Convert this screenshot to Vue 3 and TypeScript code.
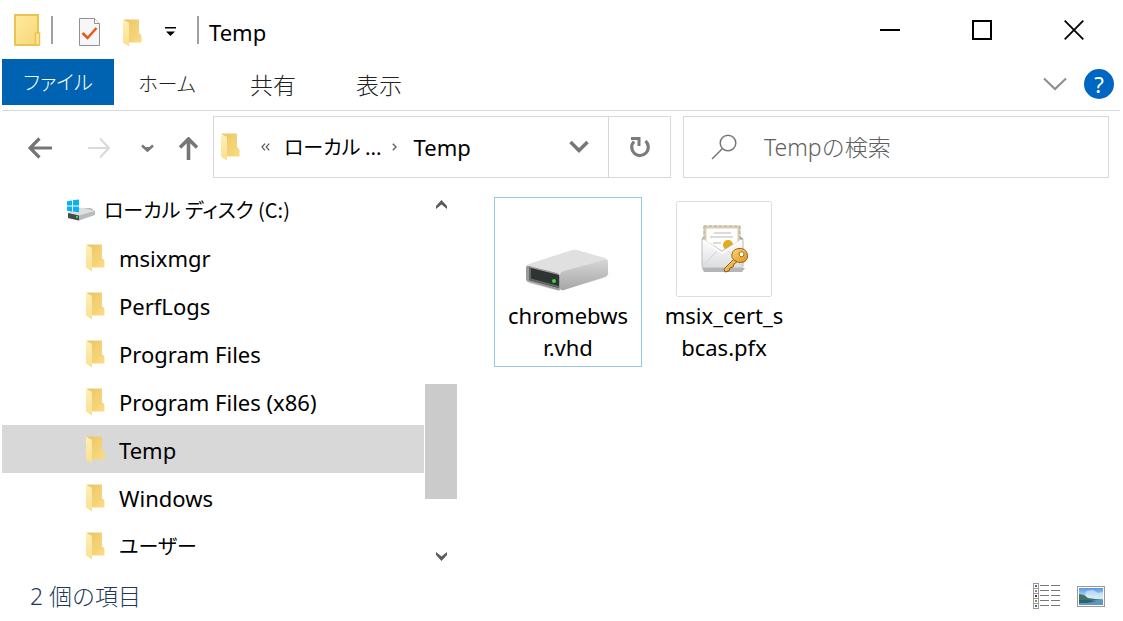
<script setup lang="ts">
import { ref } from 'vue'

interface Tab {
  label: string
  kana?: boolean
}

interface TreeItem {
  name: string
  kana?: boolean
}

interface FileItem {
  lines: string[]
  kind: 'disk' | 'certificate'
}

const tabs: Tab[] = [
  { label: 'ファイル', kana: true },
  { label: 'ホーム', kana: true },
  { label: '共有' },
  { label: '表示' },
]
const activeTab = ref('ファイル')

const folders: TreeItem[] = [
  { name: 'msixmgr' },
  { name: 'PerfLogs' },
  { name: 'Program Files' },
  { name: 'Program Files (x86)' },
  { name: 'Temp' },
  { name: 'Windows' },
  { name: 'ユーザー', kana: true },
]
const currentFolder = ref('Temp')

const files: FileItem[] = [
  { lines: ['chromebws', 'r.vhd'], kind: 'disk' },
  { lines: ['msix_cert_s', 'bcas.pfx'], kind: 'certificate' },
]
const focusedFile = ref(0)
const query = ref('')
</script>

<template>
  <div class="explorer">
    <svg class="defs" width="0" height="0" aria-hidden="true">
      <defs>
        <linearGradient id="folder-back" x1="0" y1="0" x2="1" y2="1">
          <stop offset="0" stop-color="#e9c566" />
          <stop offset="1" stop-color="#fbdc82" />
        </linearGradient>
        <linearGradient id="folder-front" x1="0" y1="0" x2="0" y2="1">
          <stop offset="0" stop-color="#fff0b5" />
          <stop offset="1" stop-color="#fbdf8d" />
        </linearGradient>
        <symbol id="folder" viewBox="0 0 19 28">
          <path d="M1 .5H16V14L18.500 16.500V23.500H6L1 22Z" fill="url(#folder-back)" />
          <path d="M0 .5 L6 4V27.500L0 23.500Z" fill="url(#folder-front)" />
        </symbol>
      </defs>
    </svg>

    <header class="titlebar">
      <svg class="app-icon" width="27" height="32" viewBox="0 0 27 32" aria-hidden="true">
        <defs>
          <linearGradient id="app-fill" x1="0" y1="0" x2="1" y2="1">
            <stop offset="0" stop-color="#ffeaa2" />
            <stop offset="1" stop-color="#f8d775" />
          </linearGradient>
        </defs>
        <rect x="1" y="1" width="23" height="30" fill="url(#app-fill)" stroke="#ebc34d" stroke-width="2" />
        <rect x="21.500" y="19" width="4" height="12" fill="#fde99b" stroke="#ebc34d" stroke-width="1.500" />
      </svg>
      <span class="divider"></span>
      <button class="quick props" aria-label="プロパティ">
        <svg width="21" height="28" viewBox="0 0 21 28">
          <path d="M.5 .5H15.500L20.500 5.500V27.500H.5Z" fill="#f7f7f8" stroke="#929292" />
          <path d="M15.500 .5V5.500H20.500" fill="#fff" stroke="#929292" />
          <path d="M3.500 15L8.500 20L17.500 10" fill="none" stroke="#e8591c" stroke-width="2.500" />
        </svg>
      </button>
      <button class="quick new-folder" aria-label="新しいフォルダー">
        <svg width="19" height="28"><use href="#folder" /></svg>
      </button>
      <button class="quick customize" aria-label="カスタマイズ">
        <svg width="11" height="10" viewBox="0 0 11 10"><path d="M0 0H11V1.500H0ZM1 4.500H10L5.500 9Z" fill="#000" /></svg>
      </button>
      <span class="divider"></span>
      <h1 class="title">Temp</h1>
      <div class="window-controls">
        <button aria-label="最小化">
          <svg width="20" height="20" viewBox="0 0 20 20"><path d="M0 10H20" stroke="#000" stroke-width="2" /></svg>
        </button>
        <button aria-label="最大化">
          <svg width="20" height="20" viewBox="0 0 20 20"><rect x="1" y="1" width="18" height="18" fill="none" stroke="#000" stroke-width="2" /></svg>
        </button>
        <button aria-label="閉じる">
          <svg width="20" height="20" viewBox="0 0 20 20"><path d="M.7 .7L19.300 19.300M19.300 .7L.7 19.300" stroke="#000" stroke-width="1.800" /></svg>
        </button>
      </div>
    </header>

    <nav class="ribbon">
      <button
        v-for="tab in tabs"
        :key="tab.label"
        class="tab"
        :class="{ active: tab.label === activeTab, kana: tab.kana }"
        @click="activeTab = tab.label"
      >{{ tab.label }}</button>
      <button class="expand" aria-label="リボンの展開">
        <svg width="24" height="14" viewBox="0 0 24 14"><path d="M1 1.500L12 12L23 1.500" fill="none" stroke="#8c8c8c" stroke-width="2" /></svg>
      </button>
      <button class="help" aria-label="ヘルプ">?</button>
    </nav>

    <div class="navbar">
      <button class="nav-back" aria-label="戻る">
        <svg width="24" height="22" viewBox="0 0 24 22"><path d="M11.500 1.500L2 11L11.500 20.500M2 11H24" fill="none" stroke="#767676" stroke-width="3.200" /></svg>
      </button>
      <button class="nav-forward" aria-label="進む">
        <svg width="24" height="22" viewBox="0 0 24 22"><path d="M13 1.500L22 11L13 20.500M22 11H1" fill="none" stroke="#d9d9d9" stroke-width="2" /></svg>
      </button>
      <button class="nav-recent" aria-label="最近表示した場所">
        <svg width="13" height="9" viewBox="0 0 13 9"><path d="M1 1.500L6.500 6.500L12 1.500M6.500 3V7" fill="none" stroke="#777" stroke-width="2.500" /></svg>
      </button>
      <button class="nav-up" aria-label="上へ">
        <svg width="19" height="23" viewBox="0 0 19 23"><path d="M1 10.500L9.500 2L18 10.500M9.500 2V23" fill="none" stroke="#767676" stroke-width="3.600" /></svg>
      </button>

      <div class="address">
        <svg class="address-icon" width="19" height="28" aria-hidden="true"><use href="#folder" /></svg>
        <svg class="overflow" width="9" height="8" viewBox="0 0 9 8" aria-hidden="true"><path d="M4 .7L1 4L4 7.300M8.200 .7L5.200 4L8.200 7.300" fill="none" stroke="#555" stroke-width="1.200" /></svg>
        <button class="crumb kana">ローカル ...</button>
        <svg class="crumb-arrow" width="5" height="8" viewBox="0 0 5 8" aria-hidden="true"><path d="M.8 .8L4 4L.8 7.200" fill="none" stroke="#666" stroke-width="1.500" /></svg>
        <button class="crumb">Temp</button>
        <button class="history" aria-label="以前の場所">
          <svg width="20" height="14" viewBox="0 0 20 14"><path d="M1.500 2L10 10.500L18.500 2" fill="none" stroke="#767676" stroke-width="3.500" /></svg>
        </button>
        <button class="refresh" aria-label="更新">
          <svg width="20" height="22" viewBox="0 0 20 22">
            <path d="M15.500 5A8.300 8.300 0 1 1 4 5.500" fill="none" stroke="#7b7b7b" stroke-width="3.200" />
            <path d="M1 1H10.500V10H7.500V4H1Z" fill="#7b7b7b" />
          </svg>
        </button>
      </div>

      <label class="search">
        <svg width="26" height="26" viewBox="0 0 26 26" aria-hidden="true"><circle cx="17" cy="9" r="7.800" fill="none" stroke="#767676" stroke-width="1.500" /><path d="M11.500 14.500L1 25" stroke="#767676" stroke-width="1.500" /></svg>
        <input v-model="query" type="text" placeholder="Tempの検索" aria-label="Tempの検索" />
      </label>
    </div>

    <main class="content">
      <aside class="sidebar">
        <ul class="tree">
          <li>
            <a class="row drive kana" href="#c">
              <svg width="29" height="22" viewBox="0 0 29 22" aria-hidden="true">
                <path d="M1 14L11 9H24L28 12V16L12 21.500L1 19Z" fill="#b9bcbd" />
                <path d="M1 14L15 8.500L28 12L12 16.500Z" fill="#dedfe0" />
                <path d="M1 14L12 16.500V21.500L1 19Z" fill="#444b4b" />
                <rect x="9" y="17" width="2" height="2" fill="#36d64c" />
                <path d="M0 2.200L5 1.500V6.500H0ZM6 1.300L12 .5V6.500H6ZM0 7.500H5V12.400L0 11.800ZM6 7.500H12V13.300L6 12.500Z" fill="#06b2f0" />
              </svg>
              <span>ローカル ディスク (C:)</span>
            </a>
          </li>
          <li v-for="item in folders" :key="item.name">
            <a
              class="row"
              :class="{ selected: item.name === currentFolder, kana: item.kana }"
              href="#folder-view"
              @click.prevent="currentFolder = item.name"
            >
              <svg width="19" height="28" aria-hidden="true"><use href="#folder" /></svg>
              <span>{{ item.name }}</span>
            </a>
          </li>
        </ul>
        <div class="scrollbar">
          <button aria-label="上へスクロール">
            <svg width="11" height="9" viewBox="0 0 11 9"><path d="M0 6L5.500 0L11 6V9L5.500 4.500L0 9Z" fill="#5c5c5c" /></svg>
          </button>
          <div class="track"><div class="thumb"></div></div>
          <button aria-label="下へスクロール">
            <svg width="11" height="9" viewBox="0 0 11 9"><path d="M0 0L5.500 4.500L11 0V3L5.500 9L0 3Z" fill="#5c5c5c" /></svg>
          </button>
        </div>
      </aside>

      <section id="folder-view" class="files">
        <button
          v-for="(file, index) in files"
          :key="file.kind"
          class="file"
          :class="{ focused: index === focusedFile }"
          @click="focusedFile = index"
        >
          <span class="thumbnail" :class="file.kind">
            <svg v-if="file.kind === 'disk'" width="90" height="44" viewBox="0 0 90 44" aria-hidden="true">
              <defs>
                <linearGradient id="disk-side" x1="0" y1="0" x2="0" y2="1">
                  <stop offset="0" stop-color="#d6d6d6" />
                  <stop offset="1" stop-color="#a6a6a6" />
                </linearGradient>
                <linearGradient id="disk-shadow" x1="0" y1="0" x2="1" y2="0">
                  <stop offset="0" stop-color="#bbb" />
                  <stop offset="1" stop-color="#bbb" stop-opacity="0" />
                </linearGradient>
              </defs>
              <path d="M72 25L89 23L76 30L45 38Z" fill="url(#disk-shadow)" />
              <path d="M2 16Q3 15 46 1.500Q49 .5 52 1L80 9Q83 10 83 12L38 24L35 42Q34 42 3 34Q1 33 1 31V19Q1 17 2 16Z" fill="#e0e0e0" />
              <path d="M35 26Q35 23 39 22L79 11Q83 10 83 14V24Q83 27 80 28L39 41Q35 42 35 39Z" fill="url(#disk-side)" />
              <path d="M1 19Q1 16 4 17L32 24Q35 25 35 28V39Q35 42 32 41L4 33Q1 32 1 30Z" fill="#999b9b" />
              <path d="M4 18.500L34 26V39L4 31Z" fill="#303333" />
              <path d="M4 18.500L6 19V29.500L34 37V39L4 31Z" fill="#666" />
              <circle cx="29" cy="32" r="2" fill="#35df3b" />
            </svg>
            <svg v-else width="50" height="50" viewBox="0 0 50 50" aria-hidden="true">
              <defs>
                <linearGradient id="envelope" x1="0" y1="0" x2="0" y2="1">
                  <stop offset="0" stop-color="#fff" />
                  <stop offset="1" stop-color="#dcdddf" />
                </linearGradient>
                <linearGradient id="gold" x1="0" y1="0" x2="1" y2="1">
                  <stop offset="0" stop-color="#ffd675" />
                  <stop offset="1" stop-color="#de9320" />
                </linearGradient>
              </defs>
              <path d="M1 43H44L41 47H3Z" fill="#b5b5b5" />
              <path d="M1 14L4 10H38L42 14V28H1Z" fill="#85888b" />
              <path d="M4 2H38V30H4Z" fill="#fffefa" stroke="#d8cdb7" stroke-width="3" />
              <path d="M3 1H39M3 1V14M39 1V14" stroke="#b9ad96" stroke-dasharray="3 2" />
              <path d="M13 8H30M9 12H32M12 18H20" stroke="#cbd1d5" stroke-width="1.500" />
              <circle cx="27" cy="20" r="5" fill="#e0ab1c" />
              <path d="M1 14L21 26L42 14V41Q42 43 40 43H3Q1 43 1 41Z" fill="url(#envelope)" stroke="#b8babc" />
              <path d="M1 42L18 24M42 42L25 24" fill="none" stroke="#d2d4d5" />
              <path d="M2 15L21 28L41 15" fill="none" stroke="#fff" stroke-width="2" />
              <path d="M33 34L23 44L24 47L28 46L29 43L32 42L33 39L37 36Z" fill="url(#gold)" stroke="#8c601c" />
              <path d="M31 29Q32 24 38 23.500Q44 23 46 28Q48 34 43 37Q37 39 33 35Q30 33 31 29Z" fill="url(#gold)" stroke="#9b6817" />
              <path d="M38 28Q42 25 43 29Q43 32 40 32Q38 31 38 28Z" fill="#fff" stroke="#a86d18" />
            </svg>
          </span>
          <span class="file-name"><span v-for="line in file.lines" :key="line">{{ line }}</span></span>
        </button>
      </section>
    </main>

    <footer class="status">
      <span class="count">2 個の項目</span>
      <button class="view-details" aria-label="詳細">
        <svg width="28" height="27" viewBox="0 0 28 27">
          <rect x=".5" y=".5" width="5" height="25" fill="#fff" stroke="#999" />
          <path d="M0 5.500H6M0 10.500H6M0 15.500H6M0 20.500H6" stroke="#999" />
          <path d="M2 3H4M2 23H4" stroke="#386d75" stroke-width="2" />
          <path d="M2 8H4M2 18H4" stroke="#968b57" stroke-width="2" />
          <path d="M2 13H4" stroke="#782e27" stroke-width="2" />
          <path d="M7 2.500H16M18 2.500H27M7 7.500H16M18 7.500H27M7 12.500H16M18 12.500H27M7 17.500H16M18 17.500H27M7 22.500H16M18 22.500H27" stroke="#777" />
        </svg>
      </button>
      <button class="view-icons" aria-label="大アイコン">
        <svg width="28" height="21" viewBox="0 0 28 21">
          <defs>
            <linearGradient id="sky" x1="0" y1="0" x2="0" y2="1">
              <stop offset="0" stop-color="#5797e7" />
              <stop offset="1" stop-color="#e0f3fa" />
            </linearGradient>
          </defs>
          <rect x=".5" y=".5" width="27" height="20" fill="#fff" stroke="#999" />
          <rect x="2" y="2" width="24" height="12" fill="url(#sky)" />
          <path d="M9 5L16 4L21 7L26 6V12H8Z" fill="#dff2fb" opacity=".6" />
          <path d="M2 8L7 9L11 12L18 13L26 13.500V15H2Z" fill="#3f7464" />
          <path d="M2 14H26V19H2Z" fill="#5d97bf" />
          <path d="M2 14H13L19 15L10 17H2Z" fill="#2b5f74" />
        </svg>
      </button>
    </footer>
  </div>
</template>

<style>
body {
  margin: 0;
  background: #fff;
}
</style>

<style scoped>
.explorer {
  display: flex;
  flex-direction: column;
  min-height: 100vh;
  box-sizing: border-box;
  padding: 0 3px 0 2px;
  background: #fff;
  color: #000;
  font-family: "Noto Sans", "Noto Sans CJK JP", sans-serif;
  font-size: 22px;
  line-height: 32px;
}
.defs { position: absolute; }
button {
  display: flex;
  align-items: center;
  justify-content: center;
  margin: 0;
  padding: 0;
  border: 0;
  background: none;
  color: inherit;
  font: inherit;
  white-space: nowrap;
}
svg { flex: none; display: block; }

.titlebar { display: flex; align-items: center; height: 59px; padding-left: 12px; }
.app-icon { margin-right: 10px; }
.divider { width: 2px; height: 28px; background: #a0a0a0; }
.quick { height: 32px; }
.props { margin-left: 26px; padding-top: 4px; }
.new-folder { margin-left: 23px; padding-top: 6px; }
.customize { margin: 4px 21px 0 23px; }
.title { margin: 0 0 0 10px; padding-top: 4px; font-size: 22px; font-weight: 400; }
.window-controls { display: flex; align-self: stretch; margin-left: auto; }
.window-controls button { width: 92px; }

.ribbon {
  display: flex;
  align-items: flex-start;
  height: 51px;
  border-bottom: 1px solid #dadada;
}
.tab {
  width: 106px;
  height: 46px;
  padding-top: 4px;
  color: #222;
  font-family: "Noto Sans CJK JP", sans-serif;
  font-size: 23px;
  font-weight: 300;
}
.tab.active { width: 112px; padding-top: 0; background: #0063b1; color: #fff; }
.expand { width: 48px; height: 46px; margin-left: auto; padding-top: 4px; }
.help {
  width: 30px;
  height: 30px;
  margin: 10px 6px 0 5px;
  border-radius: 50%;
  background: #0066c4;
  color: #fff;
}

.kana {
  font-family: "Noto Sans CJK JP", sans-serif;
  font-size: 20px;
  font-feature-settings: "palt";
}

.navbar { display: flex; align-items: stretch; height: 62px; padding: 5px 11px 7px 8px; }
.navbar > button { padding-top: 2px; }
.nav-back { width: 60px; }
.nav-forward { width: 58px; }
.nav-recent { width: 38px; }
.nav-up { width: 44px; margin-right: 3px; }
.address {
  display: flex;
  flex: 1 1 458px;
  align-items: center;
  box-sizing: border-box;
  min-width: 0;
  border: 1px solid #d9d9d9;
}
.address-icon { margin-left: 7px; }
.overflow { margin: 0 14px 0 21px; }
.crumb-arrow { margin: 0 17px 0 10px; }
.history { width: 58px; align-self: stretch; margin-left: auto; }
.refresh { width: 62px; align-self: stretch; border-left: 1px solid #d9d9d9; }
.search {
  display: flex;
  flex: 1 1 426px;
  align-items: center;
  box-sizing: border-box;
  min-width: 0;
  margin-left: 12px;
  padding: 0 27px;
  border: 1px solid #d9d9d9;
}
.search input {
  flex: 1;
  min-width: 0;
  margin-left: 27px;
  padding: 0;
  border: 0;
  outline: 0;
  background: none;
  font: inherit;
  font-size: 23px;
}
.search input::placeholder { color: #606060; opacity: 1; font-weight: 300; }

.content { display: flex; flex: 1; }
.sidebar { display: flex; flex: 0 0 455px; }
.tree { flex: 1; margin: 0; padding: 0; list-style: none; }
.row {
  display: flex;
  align-items: center;
  box-sizing: border-box;
  height: 48px;
  margin-right: 1px;
  padding: 2px 0 0 84px;
  gap: 14px;
  color: inherit;
  text-decoration: none;
  white-space: nowrap;
}
.row.drive { padding-left: 65px; gap: 8px; }
.row.selected { background: #d8d8d8; }
.scrollbar { display: flex; flex-direction: column; width: 32px; }
.scrollbar button { height: 38px; }
.scrollbar button:last-child { height: 34px; }
.track { display: flex; flex: 1; flex-direction: column; }
.thumb { height: 115px; margin-top: 161px; background: #cbcbcb; }

.files { display: flex; flex: 1; align-items: flex-start; gap: 8px; padding: 12px 0 0 37px; }
.file {
  flex-direction: column;
  box-sizing: border-box;
  width: 148px;
  padding: 3px 0;
  border: 1px solid transparent;
}
.file.focused { border-color: #99c9e9; }
.thumbnail {
  display: flex;
  align-items: center;
  justify-content: center;
  box-sizing: border-box;
  width: 96px;
  height: 96px;
  border: 1px solid transparent;
  border-radius: 2px;
}
.thumbnail.disk { padding: 44px 0 0 4px; }
.thumbnail.certificate { padding: 2px 0 0 4px; border-color: #dedede; }
.file-name { margin-top: 2px; }
.file-name span { display: block; }

.status { display: flex; align-items: center; height: 48px; padding: 0 15px 2px 28px; box-sizing: border-box; color: #1e395b; }
.count { flex: 1; font-size: 23px; font-weight: 300; }
.view-icons { margin-left: 16px; }
</style>
